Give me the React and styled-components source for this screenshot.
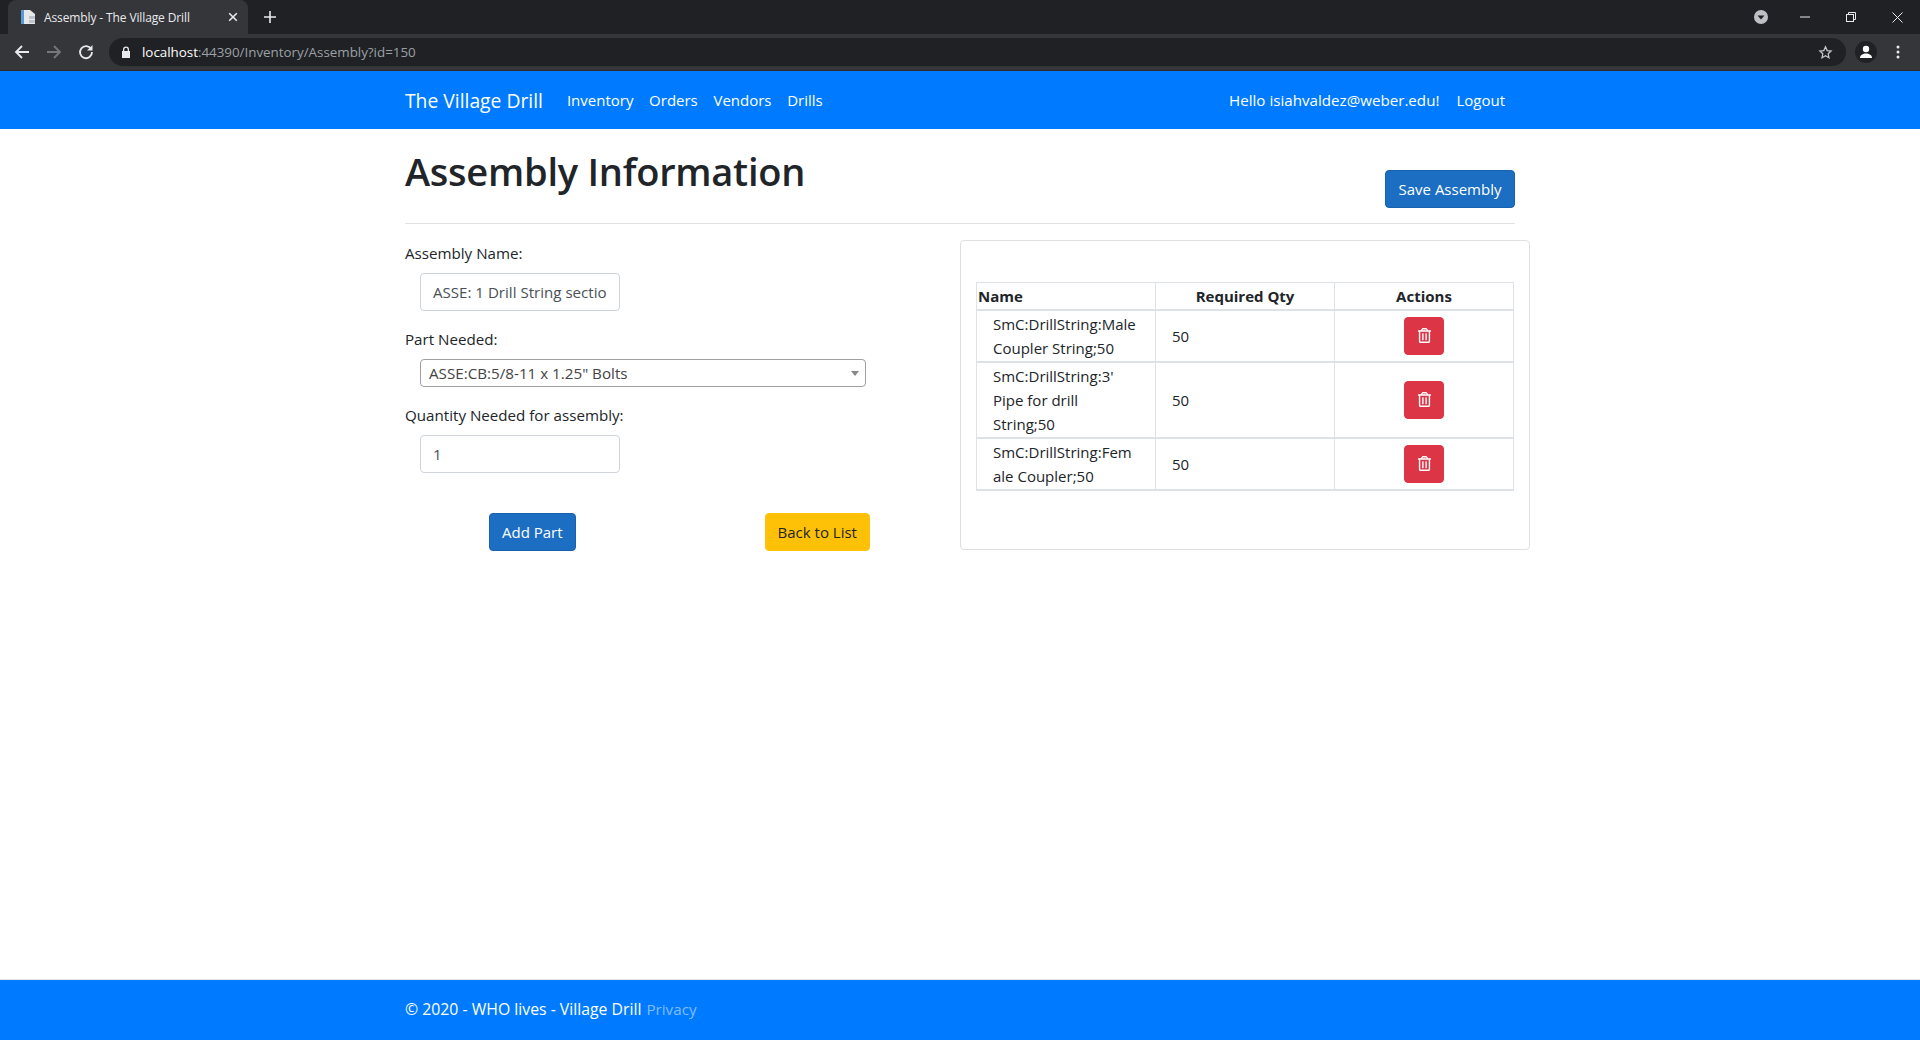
import React from "react";
import styled, { createGlobalStyle } from "styled-components";
import { FaRegTrashAlt } from "react-icons/fa";

const Global = createGlobalStyle`
  html, body { margin: 0; padding: 0; height: 100%; }
  body { font-family: "Open Sans", "Noto Sans", "Liberation Sans", sans-serif; font-size: 15px; color: #212529; background: #fff; }
  #root { height: 1040px; }
  * { box-sizing: border-box; }
`;

const Page = styled.div`display:flex;flex-direction:column;height:1040px;overflow:hidden;`;
const TabStrip = styled.div`height:34px;background:#202124;display:flex;align-items:flex-end;padding-left:8px;`;
const Tab = styled.div`width:240px;height:34px;background:#35363a;border-radius:8px 8px 0 0;display:flex;align-items:center;padding:0 10px 0 12px;color:#e8eaed;font-size:12px;gap:8px;`;
const TabTitle = styled.span`flex:1;white-space:nowrap;letter-spacing:-.12px;`;
const IconBtn = styled.span`display:inline-flex;align-items:center;justify-content:center;flex:none;`;
const NewTab = styled(IconBtn)`margin:0 0 0 12px;height:34px;width:20px;`;
const Spacer = styled.div`flex:1;`;
const WinControls = styled.div`height:34px;display:flex;align-items:center;color:#e8eaed;`;
const WinBtn = styled(IconBtn)`width:46px;height:30px;`;
const BadgeBtn = styled(WinBtn)`margin-right:-2px;`;
const Toolbar = styled.div`height:37px;background:#35363a;display:flex;align-items:center;padding:0 0 0 11px;border-bottom:1px solid #2a2b2e;`;
const NavIcon = styled(IconBtn)`width:22px;height:22px;margin-right:10px;`;
const Omnibox = styled.div`margin-left:2px;width:1737px;height:28px;border-radius:14px;background:#202124;display:flex;align-items:center;padding:0 13px 0 12px;font-size:13.4px;color:#9aa0a6;letter-spacing:-.02px;`;
const Host = styled.span`color:#fff;margin-left:11px;`;
const Avatar = styled.span`width:22px;height:22px;border-radius:50%;background:#202124;margin-left:9px;display:inline-flex;align-items:center;justify-content:center;`;
const Dots = styled(IconBtn)`margin-left:19px;`;
const Navbar = styled.nav`height:58px;background:#007bff;color:#fff;display:flex;justify-content:center;`;
const NavInner = styled.div`width:1140px;padding:0 15px;display:flex;align-items:center;`;
const Brand = styled.span`font-size:19.3px;margin-right:24px;`;
const NavLink = styled.span`font-size:15px;margin-right:15.7px;`;
const NavRight = styled.div`margin-left:auto;display:flex;align-items:center;gap:17px;padding-right:10px;`;
const Greeting = styled.span`font-size:15.15px;`;
const Logout = styled.span`font-size:15px;`;
const Main = styled.main`flex:1;display:flex;justify-content:center;`;
const Container = styled.div`width:1140px;padding:0 15px;`;
const Header = styled.div`height:95px;border-bottom:1px solid #e1e1e1;display:flex;justify-content:space-between;align-items:flex-start;`;
const Title = styled.h1`margin:19px 0 0;font-size:38px;font-weight:600;line-height:46px;letter-spacing:-.25px;`;
const Btn = styled.button`font:inherit;font-size:15px;height:38px;padding:0 12px;border-radius:4px;border:1px solid ${p=>p.$border};background:${p=>p.$bg};color:${p=>p.$fg};white-space:nowrap;`;
const SaveBtn = styled(Btn)`margin-top:41px;width:130px;`;
const Columns = styled.div`display:flex;align-items:flex-start;width:1125px;`;
const FormCol = styled.div`width:555px;flex:none;padding-top:17px;`;
const Label = styled.div`height:24px;line-height:24px;font-size:15.15px;margin-bottom:8px;`;
const Field = styled.div`margin-left:15px;width:200px;height:38px;border:1px solid #ced4da;border-radius:4px;padding:0 12px;line-height:37px;color:#495057;margin-bottom:16px;font-size:15.1px;`;
const FieldClip = styled.div`overflow:hidden;white-space:nowrap;`;
const SelectBox = styled.div`margin-left:15px;width:446px;height:28px;border:1px solid #a0a0a0;border-radius:4px;padding:0 8px;line-height:26px;color:#444;font-size:15.2px;display:flex;justify-content:space-between;align-items:center;margin-bottom:16px;`;
const Caret = styled.span`width:0;height:0;border-left:4px solid transparent;border-right:4px solid transparent;border-top:5px solid #888;margin-right:-2px;`;
const Actions = styled.div`display:flex;margin-top:40px;padding-left:84px;`;
const BackBtn = styled(Btn)`margin-left:189px;`;
const Card = styled.div`width:570px;flex:none;margin-top:16px;height:310px;border:1px solid #dfdfdf;border-radius:4px;padding:41px 15px 0;`;
const Table = styled.table`width:538px;border-collapse:collapse;table-layout:fixed;`;
const Th = styled.th`border:1px solid #dee2e6;border-bottom:2px solid #dee2e6;height:27px;padding:0 ${p=>p.$left?"1px":"0"};font-weight:700;font-size:15px;text-align:${p=>p.$left?"left":"center"};line-height:24px;`;
const NameTd = styled.td`border:1px solid #dee2e6;border-bottom:2px solid #dee2e6;padding:1px 16px;line-height:24px;font-size:15px;word-break:break-word;`;
const QtyTd = styled.td`border:1px solid #dee2e6;border-bottom:2px solid #dee2e6;padding:0 16px;`;
const ActTd = styled.td`border:1px solid #dee2e6;border-bottom:2px solid #dee2e6;text-align:center;padding:5px 0;`;
const DelBtn = styled.button`width:40px;height:38px;border:1px solid #dc3545;border-radius:4px;background:#dc3545;color:#fff;display:inline-flex;align-items:center;justify-content:center;padding:0;vertical-align:middle;`;
const Footer = styled.footer`height:61px;background:#007bff;color:#fff;display:flex;justify-content:center;border-top:1px solid #e4e4e4;`;
const FootInner = styled.div`width:1140px;padding:0 15px;display:flex;align-items:baseline;gap:5px;font-size:15.8px;line-height:59px;white-space:pre;`;
const Privacy = styled.span`color:#80bdff;font-size:15.2px;`;

const rows = [
  ["SmC:DrillString:Male Coupler String;50"],
  ["SmC:DrillString:3' Pipe for drill String;50"],
  ["SmC:DrillString:Fem\u200Bale Coupler;50"],
];

export default function App() {
  return (
    <Page>
      <Global />
      <TabStrip>
        <Tab>
          <svg width="16" height="16" viewBox="0 0 16 16"><path d="M1 1h9l5 4v10H1z" fill="#e8e8e8"/><path d="M1 1h3v14H1z" fill="#5b9bd5"/><path d="M9 7h6v3H9zM9 11h6v3H9z" fill="#bfc5cc"/></svg>
          <TabTitle>Assembly - The Village Drill</TabTitle>
          <IconBtn><svg width="10" height="10" viewBox="0 0 10 10"><path d="M1.2 1.2l7.6 7.6M8.8 1.2L1.2 8.8" stroke="#e8eaed" strokeWidth="1.6"/></svg></IconBtn>
        </Tab>
        <NewTab><svg width="12" height="12" viewBox="0 0 12 12"><path d="M6 0v12M0 6h12" stroke="#e8eaed" strokeWidth="1.6"/></svg></NewTab>
        <Spacer />
        <WinControls>
          <BadgeBtn><svg width="14" height="14" viewBox="0 0 14 14"><circle cx="7" cy="7" r="7" fill="#bdc1c6"/><path d="M3.5 5.5h7L7 9.5z" fill="#202124"/></svg></BadgeBtn>
          <WinBtn><svg width="10" height="10" viewBox="0 0 10 10"><path d="M0 5h10" stroke="#e8eaed"/></svg></WinBtn>
          <WinBtn><svg width="10" height="10" viewBox="0 0 10 10" fill="none"><path d="M2.5 2.5V.5h7v7h-2" stroke="#e8eaed"/><rect x=".5" y="2.5" width="7" height="7" stroke="#e8eaed"/></svg></WinBtn>
          <WinBtn><svg width="11" height="11" viewBox="0 0 11 11"><path d="M.5.5l10 10M10.5.5l-10 10" stroke="#e8eaed"/></svg></WinBtn>
        </WinControls>
      </TabStrip>
      <Toolbar>
        <NavIcon><svg width="16" height="16" viewBox="0 0 16 16" fill="none"><path d="M15 8H2M8 2L2 8l6 6" stroke="#e8eaed" strokeWidth="1.8"/></svg></NavIcon>
        <NavIcon><svg width="16" height="16" viewBox="0 0 16 16" fill="none"><path d="M1 8h13M8 2l6 6-6 6" stroke="#75777a" strokeWidth="1.8"/></svg></NavIcon>
        <NavIcon><svg width="16" height="16" viewBox="0 0 16 16" fill="none"><path d="M13.2 5.2A6 6 0 1 0 14 8" stroke="#e8eaed" strokeWidth="1.8"/><path d="M14.5 1v5.5H9z" fill="#e8eaed"/></svg></NavIcon>
        <Omnibox>
          <svg width="10" height="12" viewBox="0 0 10 12"><path d="M2 5V3.5a3 3 0 0 1 6 0V5h1v7H1V5zM3.3 5h3.4V3.5a1.700 1.700 0 0 0-3.400 0z" fill="#e8eaed"/></svg>
          <Host>localhost</Host>:44390/Inventory/Assembly?id=150
          <Spacer />
          <svg width="15" height="15" viewBox="0 0 24 24" fill="none"><path d="M12 3l2.700 6 6.300.7-4.700 4.300 1.300 6.500L12 17.200 6.400 20.500 7.700 14 3 9.700 9.300 9z" stroke="#c4c7c9" strokeWidth="2"/></svg>
        </Omnibox>
        <Avatar><svg width="14" height="14" viewBox="0 0 14 14"><circle cx="7" cy="4" r="3.200" fill="#fff"/><path d="M1 13c0-3 3-4.500 6-4.500s6 1.500 6 4.500z" fill="#fff"/></svg></Avatar>
        <Dots><svg width="4" height="14" viewBox="0 0 4 14"><circle cx="2" cy="2" r="1.500" fill="#e8eaed"/><circle cx="2" cy="7" r="1.500" fill="#e8eaed"/><circle cx="2" cy="12" r="1.500" fill="#e8eaed"/></svg></Dots>
      </Toolbar>
      <Navbar>
        <NavInner>
          <Brand>The Village Drill</Brand>
          <NavLink>Inventory</NavLink>
          <NavLink>Orders</NavLink>
          <NavLink>Vendors</NavLink>
          <NavLink>Drills</NavLink>
          <NavRight>
            <Greeting>Hello isiahvaldez@weber.edu!</Greeting>
            <Logout>Logout</Logout>
          </NavRight>
        </NavInner>
      </Navbar>
      <Main>
        <Container>
          <Header>
            <Title>Assembly Information</Title>
            <SaveBtn $bg="#1b6ec2" $border="#1861ac" $fg="#fff">Save Assembly</SaveBtn>
          </Header>
          <Columns>
            <FormCol>
              <Label>Assembly Name:</Label>
              <Field><FieldClip>ASSE: 1 Drill String section</FieldClip></Field>
              <Label>Part Needed:</Label>
              <SelectBox>ASSE:CB:5/8-11 x 1.25" Bolts<Caret /></SelectBox>
              <Label>Quantity Needed for assembly:</Label>
              <Field>1</Field>
              <Actions>
                <Btn $bg="#1b6ec2" $border="#1861ac" $fg="#fff">Add Part</Btn>
                <BackBtn $bg="#ffc107" $border="#ffc107" $fg="#212529">Back to List</BackBtn>
              </Actions>
            </FormCol>
            <Card>
              <Table>
                <thead>
                  <tr><Th $left>Name</Th><Th>Required Qty</Th><Th>Actions</Th></tr>
                </thead>
                <tbody>
                  {rows.map((r, i) => (
                    <tr key={i}>
                      <NameTd>{r[0]}</NameTd>
                      <QtyTd>50</QtyTd>
                      <ActTd><DelBtn><FaRegTrashAlt size={15} /></DelBtn></ActTd>
                    </tr>
                  ))}
                </tbody>
              </Table>
            </Card>
          </Columns>
        </Container>
      </Main>
      <Footer>
        <FootInner>© 2020 - WHO lives - Village Drill<Privacy>Privacy</Privacy></FootInner>
      </Footer>
    </Page>
  );
}
